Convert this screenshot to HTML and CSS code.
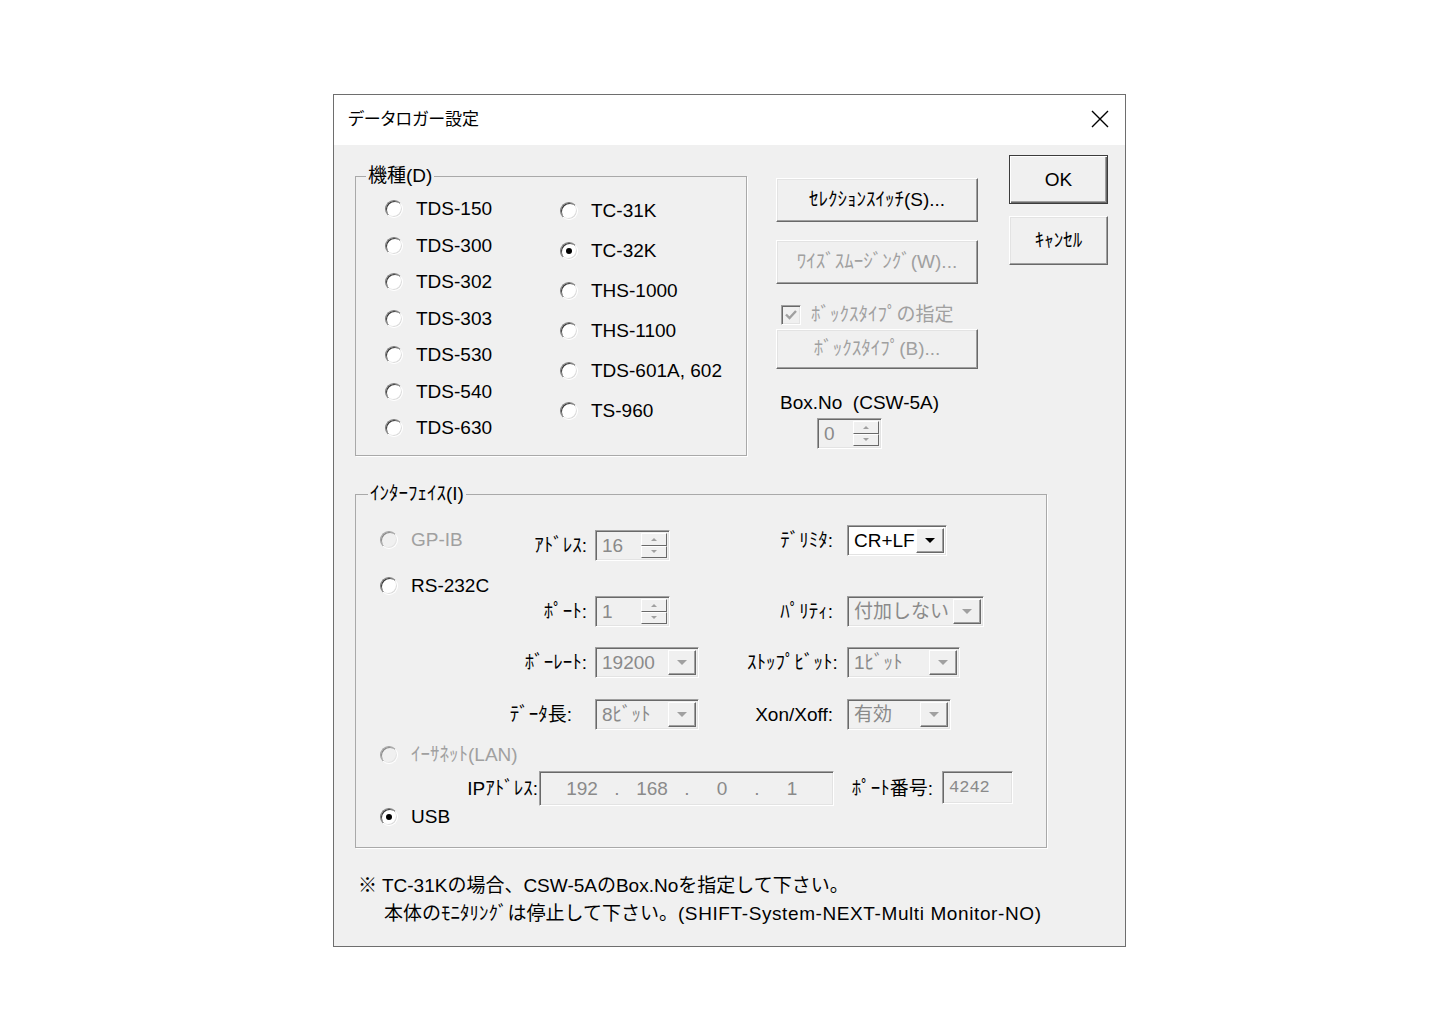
FILE: index.html
```html
<!DOCTYPE html>
<html lang="ja">
<head>
<meta charset="utf-8">
<title>データロガー設定</title>
<link rel="stylesheet" href="styles.css">
</head>
<body>
<div class="page">
  <div class="dialog">
    <div class="titlebar">
      <span class="title">データロガー設定</span>
      <svg class="close" width="18" height="18" viewBox="0 0 18 18"><path d="M1 1L17 17M17 1L1 17" stroke="#000" stroke-width="1.4" fill="none"/></svg>
    </div>
    <div class="body">
      <div class="top">
        <fieldset class="group model">
          <legend>機種(D)</legend>
          <div class="models">
            <div class="col col1">
              <label class="radio"><span class="dot"></span>TDS-150</label>
              <label class="radio"><span class="dot"></span>TDS-300</label>
              <label class="radio"><span class="dot"></span>TDS-302</label>
              <label class="radio"><span class="dot"></span>TDS-303</label>
              <label class="radio"><span class="dot"></span>TDS-530</label>
              <label class="radio"><span class="dot"></span>TDS-540</label>
              <label class="radio"><span class="dot"></span>TDS-630</label>
            </div>
            <div class="col col2">
              <label class="radio"><span class="dot"></span>TC-31K</label>
              <label class="radio"><span class="dot on"></span>TC-32K</label>
              <label class="radio"><span class="dot"></span>THS-1000</label>
              <label class="radio"><span class="dot"></span>THS-1100</label>
              <label class="radio"><span class="dot"></span>TDS-601A, 602</label>
              <label class="radio"><span class="dot"></span>TS-960</label>
            </div>
          </div>
        </fieldset>

        <div class="midcol">
          <div class="btn wide">ｾﾚｸｼｮﾝｽｲｯﾁ(S)...</div>
          <div class="btn wide dis second">ﾜｲｽﾞｽﾑｰｼﾞﾝｸﾞ(W)...</div>
          <div class="check dis">
            <span class="cbox"><svg width="14" height="14" viewBox="0 0 14 14"><path d="M2 6.5L5.5 10L12 3" stroke="#a0a0a0" stroke-width="2.4" fill="none"/></svg></span>
            ﾎﾞｯｸｽﾀｲﾌﾟの指定
          </div>
          <div class="btn wide dis third">ﾎﾞｯｸｽﾀｲﾌﾟ(B)...</div>
          <div class="boxno">Box.No&nbsp; (CSW-5A)</div>
          <div class="spin s65 boxspin">
            <span class="val">0</span>
            <span class="arr"><span class="up"></span><span class="down"></span></span>
          </div>
        </div>

        <div class="rightcol">
          <div class="btn dlg default">OK</div>
          <div class="btn dlg cancel">ｷｬﾝｾﾙ</div>
        </div>
      </div>

      <fieldset class="group iface">
        <legend>ｲﾝﾀｰﾌｪｲｽ(I)</legend>
        <div class="rows">
          <div class="row ra">
            <label class="radio dis gp"><span class="dot"></span>GP-IB</label>
            <span class="lbl l1 addr">ｱﾄﾞﾚｽ:</span>
            <div class="spin s75 end">
              <span class="val">16</span>
              <span class="arr"><span class="up"></span><span class="down"></span></span>
            </div>
            <span class="lbl l2">ﾃﾞﾘﾐﾀ:</span>
            <div class="combo on w100 start">
              <span class="val">CR+LF</span><span class="drop"></span>
            </div>
          </div>
          <div class="row rb">
            <label class="radio rs"><span class="dot"></span>RS-232C</label>
          </div>
          <div class="row rc">
            <span class="cell"></span>
            <span class="lbl l1">ﾎﾟｰﾄ:</span>
            <div class="spin s75">
              <span class="val">1</span>
              <span class="arr"><span class="up"></span><span class="down"></span></span>
            </div>
            <span class="lbl l2">ﾊﾟﾘﾃｨ:</span>
            <div class="combo w137">
              <span class="val">付加しない</span><span class="drop"></span>
            </div>
          </div>
          <div class="row rd">
            <span class="cell"></span>
            <span class="lbl l1">ﾎﾞｰﾚｰﾄ:</span>
            <div class="combo w104">
              <span class="val">19200</span><span class="drop"></span>
            </div>
            <span class="lbl l2">ｽﾄｯﾌﾟﾋﾞｯﾄ:</span>
            <div class="combo w113">
              <span class="val">1ﾋﾞｯﾄ</span><span class="drop"></span>
            </div>
          </div>
          <div class="row re">
            <span class="cell"></span>
            <span class="lbl l1 short">ﾃﾞｰﾀ長:</span>
            <div class="combo w104">
              <span class="val">8ﾋﾞｯﾄ</span><span class="drop"></span>
            </div>
            <span class="lbl l2">Xon/Xoff:</span>
            <div class="combo w104">
              <span class="val">有効</span><span class="drop"></span>
            </div>
          </div>
          <div class="row rf">
            <label class="radio dis"><span class="dot"></span>ｲｰｻﾈｯﾄ(LAN)</label>
          </div>
          <div class="row rg">
            <span class="lbl ip">IPｱﾄﾞﾚｽ:</span>
            <div class="ipbox">
              <span class="oct">192</span><span class="sep">.</span>
              <span class="oct">168</span><span class="sep">.</span>
              <span class="oct">0</span><span class="sep">.</span>
              <span class="oct">1</span>
            </div>
            <span class="lbl portno">ﾎﾟｰﾄ番号:</span>
            <div class="portbox">4242</div>
          </div>
          <div class="row rh">
            <label class="radio"><span class="dot on"></span>USB</label>
          </div>
        </div>
      </fieldset>

      <div class="note">
        <div>※ TC-31Kの場合、CSW-5AのBox.Noを指定して下さい。</div>
        <div class="l2">本体のﾓﾆﾀﾘﾝｸﾞは停止して下さい。<span class="cmd">(SHIFT-System-NEXT-Multi Monitor-NO)</span></div>
      </div>
    </div>
  </div>
</div>
</body>
</html>
```

FILE: styles.css
```css
* { box-sizing: border-box; }

html, body {
  margin: 0;
  background: #fff;
}

.page {
  padding: 94px 0 0 333px;
}

.dialog {
  width: 793px;
  height: 853px;
  border: 1px solid #6e6e6e;
  background: #f0f0f0;
  display: flex;
  flex-direction: column;
  font-family: "Liberation Sans", "Noto Sans CJK JP", sans-serif;
  font-size: 19px;
  line-height: 20px;
  color: #000;
}

.titlebar {
  height: 50px;
  flex: none;
  background: #fff;
  display: flex;
  align-items: center;
  justify-content: space-between;
  padding: 0 16px 0 14px;
}

.title {
  font-family: "Noto Sans CJK JP", sans-serif;
  font-size: 17px;
  font-feature-settings: "palt";
  margin-top: -4px;
}

.close { display: block; margin-top: -2px; }

.body {
  flex: 1;
  padding-left: 21px;
}

.top {
  display: flex;
  align-items: flex-start;
}

/* group boxes */
.group {
  margin: 0;
  padding: 0;
  min-width: 0;
  border: 1px solid #a9a9a9;
  box-shadow: 1px 1px 0 #fff;
}

.group legend {
  padding: 0 2px;
  margin-left: 10px;
  line-height: 20px;
}

.model {
  width: 392px;
  height: 290px;
  margin-top: 21px;
}

.models {
  display: flex;
  padding: 5px 0 0 29px;
}

.col1 { width: 175px; }
.col1 .radio { height: 36.5px; }
.col2 .radio { height: 40px; }

/* radio */
.radio {
  display: flex;
  align-items: center;
  gap: 13px;
  white-space: nowrap;
}

.dot {
  flex: none;
  position: relative;
  width: 18px;
  height: 18px;
  border-radius: 50%;
  background: #fff;
  border: 1px solid;
  border-color: #7a7a7a #fff #fff #7a7a7a;
  box-shadow: inset 1px 1px 0 #3c3c3c, inset -1px -1px 0 #dcdcdc;
}

.dot.on::after {
  content: "";
  position: absolute;
  left: 50%;
  top: 50%;
  width: 6px;
  height: 6px;
  margin: -3px 0 0 -3px;
  border-radius: 50%;
  background: #000;
}

.radio.dis { color: #a0a0a0; }
.radio.dis .dot {
  background: #f0f0f0;
  border-color: #a0a0a0 #fff #fff #a0a0a0;
  box-shadow: inset 1px 1px 0 #8a8a8a, inset -1px -1px 0 #e3e3e3;
}

/* buttons */
.btn {
  display: flex;
  align-items: center;
  justify-content: center;
  background: #f0f0f0;
  border: 1px solid;
  border-color: #fff #696969 #696969 #fff;
  box-shadow: inset -1px -1px 0 #a0a0a0, inset 1px 1px 0 #e3e3e3;
  white-space: nowrap;
}

.btn.dis { color: #a0a0a0; }

.midcol {
  width: 202px;
  margin-left: 29px;
  margin-top: 33px;
  display: flex;
  flex-direction: column;
  align-items: flex-start;
}

.btn.wide { width: 202px; height: 44px; }
.btn.second { margin-top: 18px; }
.btn.third { height: 40px; margin-top: 4px; }

.check {
  display: flex;
  align-items: center;
  gap: 10px;
  height: 20px;
  margin-top: 21px;
  margin-left: 5px;
  white-space: nowrap;
}

.check.dis { color: #a0a0a0; }

.cbox {
  width: 20px;
  height: 20px;
  display: flex;
  align-items: center;
  justify-content: center;
  background: #f0f0f0;
  border: 1px solid;
  border-color: #a0a0a0 #fff #fff #a0a0a0;
  box-shadow: inset 1px 1px 0 #696969, inset -1px -1px 0 #e3e3e3;
}

.cbox svg { display: block; }

.boxno {
  margin-top: 24px;
  margin-left: 4px;
  white-space: nowrap;
}

.boxspin {
  margin-top: 5px;
  margin-left: 41px;
}

.rightcol {
  width: 99px;
  margin-left: 31px;
  margin-top: 10px;
  display: flex;
  flex-direction: column;
}

.btn.dlg { width: 99px; height: 49px; }
.btn.default {
  border-color: #3c3c3c;
  box-shadow: inset 1px 1px 0 #fff, inset -1px -1px 0 #696969, inset -2px -2px 0 #a0a0a0;
}
.btn.cancel { margin-top: 12px; }

/* sunken fields */
.spin, .combo, .ipbox, .portbox {
  border: 1px solid;
  border-color: #a0a0a0 #fff #fff #a0a0a0;
  box-shadow: inset 1px 1px 0 #696969, inset -1px -1px 0 #e3e3e3;
  background: #f0f0f0;
  color: #8a8a8a;
}

.spin {
  display: flex;
  height: 31px;
  padding: 2px;
}

.spin.s75 { width: 75px; }
.spin.s65 { width: 65px; }

.spin .val, .combo .val {
  flex: 1;
  display: flex;
  align-items: center;
  padding-left: 4px;
  white-space: nowrap;
  overflow: hidden;
}

.spin .arr {
  width: 26px;
  display: flex;
  flex-direction: column;
}

.spin .up, .spin .down {
  flex: 1;
  display: flex;
  align-items: center;
  justify-content: center;
  border: 1px solid;
  border-color: #fff #696969 #696969 #fff;
}

.spin .up::before {
  content: "";
  border-left: 3px solid transparent;
  border-right: 3px solid transparent;
  border-bottom: 3px solid #a0a0a0;
}

.spin .down::before {
  content: "";
  border-left: 3px solid transparent;
  border-right: 3px solid transparent;
  border-top: 3px solid #a0a0a0;
}

.combo {
  display: flex;
  height: 31px;
  padding: 2px;
}

.combo.on {
  background: #fff;
  color: #000;
}

.combo .drop {
  width: 28px;
  flex: none;
  display: flex;
  align-items: center;
  justify-content: center;
  background: #f0f0f0;
  border: 1px solid;
  border-color: #fff #696969 #696969 #fff;
  box-shadow: inset -1px -1px 0 #a0a0a0;
}

.combo .drop::before {
  content: "";
  border-left: 5px solid transparent;
  border-right: 5px solid transparent;
  border-top: 5px solid #a0a0a0;
}

.combo.on .drop::before { border-top-color: #000; }

.combo.w100 { width: 100px; }
.combo.w104 { width: 104px; }
.combo.w113 { width: 113px; }
.combo.w137 { width: 137px; }

/* interface group */
.iface {
  width: 692px;
  height: 364px;
  margin-top: 28px;
}

.iface legend { margin-left: 12px; }

.rows {
  padding: 21px 0 0 24px;
  display: flex;
  flex-direction: column;
}

.row {
  display: grid;
  grid-template-columns: 120px 95px 152px 100px 1fr;
  align-items: center;
}

.lbl { white-space: nowrap; text-align: right; }
.lbl.l1 { padding-right: 8px; }
.lbl.l1.short { padding-right: 23px; }
.lbl.l1.addr { padding-top: 5px; }
.lbl.l2 { padding-right: 14px; }

.ra { height: 36px; }
.ra .gp { align-self: start; margin-top: 5px; }
.ra .end { align-self: end; }
.ra .start { align-self: start; }
.ra .l2 { align-self: start; margin-top: 6px; }

.rb { height: 35px; }
.rb .radio { align-self: end; grid-column: 1 / span 3; }

.rc { height: 31px; }
.rd { height: 31px; margin-top: 20px; }
.re { height: 31px; margin-top: 21px; }

.rf { height: 20px; margin-top: 15px; }
.rf .radio { grid-column: 1 / span 3; }

.rg {
  display: flex;
  align-items: flex-start;
  height: 35px;
  margin-top: 6px;
}

.lbl.ip {
  width: 159px;
  padding-right: 1px;
  margin-top: 8px;
}

.ipbox {
  width: 295px;
  height: 35px;
  display: flex;
  align-items: center;
  padding-left: 14px;
}

.ipbox .oct {
  width: 56px;
  text-align: center;
}

.ipbox .sep {
  width: 14px;
  text-align: center;
}

.lbl.portno {
  width: 108px;
  padding-right: 9px;
  margin-top: 8px;
}

.portbox {
  width: 71px;
  height: 33px;
  display: flex;
  align-items: center;
  padding-left: 6px;
  font-family: "Liberation Mono", monospace;
  font-size: 17px;
}

.rh { height: 20px; margin-top: 1px; }

/* note */
.note {
  margin-top: 24px;
  padding-left: 3px;
  line-height: 28px;
  white-space: nowrap;
}

.note .l2 { padding-left: 26px; }
.note .cmd { letter-spacing: 0.6px; }
```
